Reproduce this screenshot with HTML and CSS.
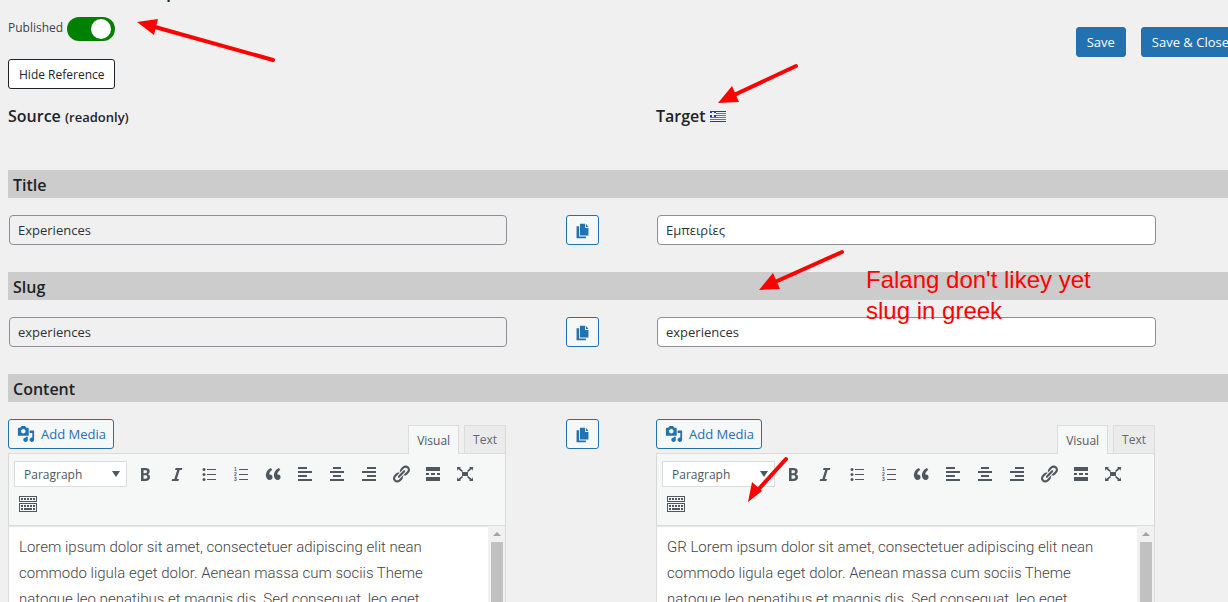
FILE: index.html
```html
<!DOCTYPE html>
<html lang="en">
<head>
  <meta charset="UTF-8" />
  <title>Falang translation</title>
  <link rel="stylesheet" href="styles.css">
</head>
<body>
  <!-- icon set -->
  <svg class="icon-defs" aria-hidden="true">
    <symbol id="i-copy" viewBox="0 0 20 20">
      <path d="M7 2h6v5h4v9H7zM14 2l3 4h-3zM3 5h3v12h8v2H3z"/>
    </symbol>
    <symbol id="i-media" viewBox="0 0 20 20">
      <path d="M13 11V4c0-.55-.45-1-1-1h-1.670L9 1H5L3.670 3H2c-.55 0-1 .45-1 1v7c0 .55.45 1 1 1h10c.55 0 1-.45 1-1zM7 4.500c1.380 0 2.500 1.120 2.500 2.500S8.380 9.500 7 9.500 4.500 8.380 4.500 7 5.620 4.500 7 4.500zM14 6h5v10.500c0 1.380-1.120 2.500-2.500 2.500S14 17.880 14 16.500s1.120-2.500 2.500-2.500c.17 0 .34.02.5.05V9h-3V6zm-4 8.050V13h2v3.500c0 1.380-1.120 2.500-2.500 2.500S7 17.880 7 16.500 8.120 14 9.500 14c.17 0 .34.02.5.05z"/>
    </symbol>
    <symbol id="i-bold" viewBox="0 0 20 20">
      <path d="M6 4v13h4.540c1.370 0 2.460-.33 3.260-1 .8-.66 1.200-1.580 1.200-2.770 0-.84-.17-1.510-.51-2.010s-.9-.85-1.670-1.030v-.09c.57-.1 1.020-.4 1.360-.9s.51-1.130.51-1.910c0-1.140-.39-1.980-1.170-2.500C12.750 4.260 11.500 4 9.780 4H6zm2.570 5.150V6.260h1.360c.73 0 1.270.11 1.610.32.34.22.51.58.51 1.070 0 .54-.16.92-.47 1.150s-.82.35-1.510.35h-1.500zm0 2.190h1.600c1.440 0 2.160.53 2.160 1.610 0 .6-.17 1.050-.51 1.340s-.86.43-1.570.43H8.570v-3.380z"/>
    </symbol>
    <symbol id="i-italic" viewBox="0 0 20 20">
      <path d="M14.780 6h-2.130l-2.800 9h2.120l-.62 2H4.600l.62-2h2.140l2.800-9H8.030l.62-2h6.750z"/>
    </symbol>
    <symbol id="i-ul" viewBox="0 0 20 20">
      <path d="M8 5h9v1H8zM8 10h9v1H8zM8 15h9v1H8z"/>
      <circle cx="5" cy="5.500" r="1.500"/><circle cx="5" cy="10.500" r="1.500"/><circle cx="5" cy="15.500" r="1.500"/>
    </symbol>
    <symbol id="i-quote" viewBox="0 0 20 20">
      <path d="M9.490 13.220c0-.74-.2-1.380-.61-1.900-.62-.78-1.830-.88-2.530-.72-.29-1.650 1.110-3.750 2.920-4.650L7.880 4c-2.730 1.300-5.420 4.280-4.960 8.050C3.210 14.430 4.590 16 6.540 16c.85 0 1.560-.25 2.120-.75s.83-1.180.83-2.030zm8.050 0c0-.74-.2-1.380-.61-1.900-.63-.78-1.830-.88-2.530-.72-.29-1.650 1.110-3.750 2.920-4.650L15.930 4c-2.730 1.300-5.410 4.280-4.950 8.050.29 2.380 1.660 3.950 3.610 3.950.85 0 1.560-.25 2.120-.75s.83-1.180.83-2.030z"/>
    </symbol>
    <symbol id="i-left" viewBox="0 0 20 20">
      <path d="M12 5V3H3v2h9zm5 4V7H3v2h14zm-5 4v-2H3v2h9zm5 4v-2H3v2h14z"/>
    </symbol>
    <symbol id="i-center" viewBox="0 0 20 20">
      <path d="M14 5V3H6v2h8zm3 4V7H3v2h14zm-3 4v-2H6v2h8zm3 4v-2H3v2h14z"/>
    </symbol>
    <symbol id="i-right" viewBox="0 0 20 20">
      <path d="M17 5V3H8v2h9zm0 4V7H3v2h14zm0 4v-2H8v2h9zm0 4v-2H3v2h14z"/>
    </symbol>
    <symbol id="i-link" viewBox="0 0 20 20">
      <path d="M17.740 2.760c1.680 1.690 1.680 4.410 0 6.100l-1.530 1.520c-1.120 1.120-2.700 1.470-4.140 1.090l2.620-2.610.76-.77.76-.76c.84-.84.84-2.200 0-3.040-.84-.85-2.200-.85-3.040 0l-.77.76-3.380 3.380c-.37-1.440-.02-3.020 1.100-4.140l1.520-1.530c1.690-1.680 4.420-1.680 6.100 0zM8.590 13.430l5.340-5.340c.42-.42.42-1.100 0-1.520-.44-.43-1.130-.39-1.530 0l-5.330 5.340c-.42.42-.42 1.100 0 1.520.44.43 1.130.39 1.520 0zm-.76 2.290l4.140-4.150c.38 1.440.03 3.020-1.090 4.140l-1.520 1.530c-1.690 1.680-4.410 1.680-6.100 0-1.680-1.680-1.680-4.420 0-6.100l1.530-1.520c1.120-1.120 2.700-1.470 4.140-1.100l-4.140 4.150c-.85.84-.85 2.200 0 3.050.84.84 2.200.84 3.040 0z"/>
    </symbol>
    <symbol id="i-more" viewBox="0 0 20 20">
      <path d="M17 7V3H3v4h14zM6 11V9H3v2h3zm6 0V9H8v2h4zm5 0V9h-3v2h3zm0 6v-4H3v4h14z"/>
    </symbol>
    <symbol id="i-full" viewBox="0 0 20 20">
      <path d="M7 8h6v4H7zM2 3h4L5 4l3 3-1 1-4-3-1 2zM18 3h-4l1 1-3 3 1 1 4-3 1 2zM2 17h4l-1-1 3-3-1-1-4 3-1-2zM18 17h-4l1-1-3-3 1-1 4 3 1-2z"/>
    </symbol>
    <symbol id="i-sink" viewBox="0 0 20 20">
      <path fill-rule="evenodd" d="M1 2h18v6H1zM2 3v4h16V3zM1 9h18v9H1zM2 10v7h16v-7z"/>
      <path d="M3 4h2v2H3zM6 4h2v2H6zM9 4h2v2H9zM12 4h2v2h-2zM15 4h2v2h-2zM3 11h2v2H3zM6 11h2v2H6zM9 11h2v2H9zM12 11h2v2h-2zM15 11h2v2h-2zM3 14h2v2H3zM6 14h8v2H6zM15 14h2v2h-2z"/>
    </symbol>
  </svg>

  <div class="page-title">p</div>

  <header class="top">
    <div>
      <label class="publish">Published <input type="checkbox" class="switch" checked></label>
      <button class="btn btn-dark">Hide Reference</button>
    </div>
    <div class="actions">
      <button class="btn btn-primary">Save</button>
      <button class="btn btn-primary">Save &amp; Close</button>
    </div>
  </header>

  <main>
    <div class="row heads">
      <h2>Source <small>(readonly)</small></h2>
      <h2 class="target">Target
        <svg class="flag" viewBox="0 0 16 11" aria-label="Greek">
          <path fill="#eef2fb" d="M0 0h16v11H0z"/>
          <path fill="#1c3fae" d="M0 0h16v1H0zM0 10h16v1H0zM0 0h2v2H0zM4 0h2v2H4zM0 4h2v2H0zM4 4h2v2H4z"/>
          <path fill="#4f74d2" d="M6 2h10v1H6zM6 4h10v1H6zM0 6h16v1H0zM0 8h16v1H0z"/>
        </svg>
      </h2>
    </div>

    <h3 class="bar">Title</h3>
    <div class="row">
      <input type="text" class="field" value="Experiences" aria-label="Source title" readonly>
      <button class="btn btn-copy" aria-label="Copy title"><svg><use href="#i-copy"/></svg></button>
      <input type="text" class="field" value="Εμπειρίες" aria-label="Target title">
    </div>

    <h3 class="bar">Slug</h3>
    <div class="row">
      <input type="text" class="field" value="experiences" aria-label="Source slug" readonly>
      <button class="btn btn-copy" aria-label="Copy slug"><svg><use href="#i-copy"/></svg></button>
      <input type="text" class="field" value="experiences" aria-label="Target slug">
    </div>

    <h3 class="bar">Content</h3>
    <div class="row">
      <section class="editor">
        <div class="editor-tools">
          <button class="btn btn-media"><svg><use href="#i-media"/></svg>Add Media</button>
          <div class="tabs">
            <button class="tab active">Visual</button>
            <button class="tab">Text</button>
          </div>
        </div>
        <div class="editor-box">
          <div class="toolbar">
            <select class="format" aria-label="Source format"><option>Paragraph</option></select>
            <button class="tool" aria-label="Bold"><svg><use href="#i-bold"/></svg></button>
            <button class="tool" aria-label="Italic"><svg><use href="#i-italic"/></svg></button>
            <button class="tool" aria-label="Bulleted list"><svg><use href="#i-ul"/></svg></button>
            <button class="tool" aria-label="Numbered list">
              <svg viewBox="0 0 20 20"><path d="M8 5h9v1H8zM8 10h9v1H8zM8 15h9v1H8z"/><text x="3" y="7">1</text><text x="3" y="12">2</text><text x="3" y="17">3</text></svg>
            </button>
            <button class="tool" aria-label="Blockquote"><svg><use href="#i-quote"/></svg></button>
            <button class="tool" aria-label="Align left"><svg><use href="#i-left"/></svg></button>
            <button class="tool" aria-label="Align center"><svg><use href="#i-center"/></svg></button>
            <button class="tool" aria-label="Align right"><svg><use href="#i-right"/></svg></button>
            <button class="tool" aria-label="Link"><svg><use href="#i-link"/></svg></button>
            <button class="tool" aria-label="Read more"><svg><use href="#i-more"/></svg></button>
            <button class="tool" aria-label="Fullscreen"><svg><use href="#i-full"/></svg></button>
            <button class="tool" aria-label="Toolbar toggle"><svg><use href="#i-sink"/></svg></button>
          </div>
          <div class="editor-body">
            <div class="text">Lorem ipsum dolor sit amet, consectetuer adipiscing elit nean<br>commodo ligula eget dolor. Aenean massa cum sociis Theme<br>natoque leo penatibus et magnis dis. Sed consequat, leo eget</div>
            <div class="scroll"></div>
          </div>
        </div>
      </section>

      <button class="btn btn-copy" aria-label="Copy content"><svg><use href="#i-copy"/></svg></button>

      <section class="editor">
        <div class="editor-tools">
          <button class="btn btn-media"><svg><use href="#i-media"/></svg>Add Media</button>
          <div class="tabs">
            <button class="tab active">Visual</button>
            <button class="tab">Text</button>
          </div>
        </div>
        <div class="editor-box">
          <div class="toolbar">
            <select class="format" aria-label="Target format"><option>Paragraph</option></select>
            <button class="tool" aria-label="Bold"><svg><use href="#i-bold"/></svg></button>
            <button class="tool" aria-label="Italic"><svg><use href="#i-italic"/></svg></button>
            <button class="tool" aria-label="Bulleted list"><svg><use href="#i-ul"/></svg></button>
            <button class="tool" aria-label="Numbered list">
              <svg viewBox="0 0 20 20"><path d="M8 5h9v1H8zM8 10h9v1H8zM8 15h9v1H8z"/><text x="3" y="7">1</text><text x="3" y="12">2</text><text x="3" y="17">3</text></svg>
            </button>
            <button class="tool" aria-label="Blockquote"><svg><use href="#i-quote"/></svg></button>
            <button class="tool" aria-label="Align left"><svg><use href="#i-left"/></svg></button>
            <button class="tool" aria-label="Align center"><svg><use href="#i-center"/></svg></button>
            <button class="tool" aria-label="Align right"><svg><use href="#i-right"/></svg></button>
            <button class="tool" aria-label="Link"><svg><use href="#i-link"/></svg></button>
            <button class="tool" aria-label="Read more"><svg><use href="#i-more"/></svg></button>
            <button class="tool" aria-label="Fullscreen"><svg><use href="#i-full"/></svg></button>
            <button class="tool" aria-label="Toolbar toggle"><svg><use href="#i-sink"/></svg></button>
          </div>
          <div class="editor-body">
            <div class="text">GR Lorem ipsum dolor sit amet, consectetuer adipiscing elit nean<br>commodo ligula eget dolor. Aenean massa cum sociis Theme<br>natoque leo penatibus et magnis dis. Sed consequat, leo eget</div>
            <div class="scroll"></div>
          </div>
        </div>
      </section>
    </div>
  </main>

  <!-- notes drawn over the form -->
  <svg class="arrows" aria-hidden="true">
    <g stroke="#f00" stroke-width="4" stroke-linecap="round">
      <path d="M273 60L155 27M796 66L734 95M842 252L775 282M786 459L757 491"/>
    </g>
    <path fill="#f00" d="M137 22l21-3-4 16zM718 103l14-17 7 16zM759 290l14-17 7 16zM748 502l4-20 10 9z"/>
  </svg>
  <p class="note">Falang don't likey yet<br>slug in greek</p>
</body>
</html>
```
FILE: styles.css
```css
* {
  box-sizing: border-box;
}
html {
  overflow: hidden;
}
body {
  position: relative;
  margin: 0;
  padding-left: 8px;
  height: 100vh;
  overflow: hidden;
  background-color: #f0f0f0;
  color: #1d2327;
  font-family: "Segoe UI", "Open Sans", sans-serif;
  font-size: 13px;
}
button, input, select {
  font-family: inherit;
  font-size: 13px;
}
svg {
  width: 20px;
  height: 20px;
  fill: currentColor;
}
.icon-defs {
  position: absolute;
  width: 0;
  height: 0;
}

/* header */
.page-title {
  position: absolute;
  top: -24px;
  left: 166px;
  font-size: 18px;
  line-height: 30px;
  font-weight: 600;
}
.top {
  display: flex;
  justify-content: space-between;
  padding-top: 17px;
}
.publish {
  display: flex;
  gap: 4px;
  height: 24px;
  margin-bottom: 18px;
  color: #3c434a;
  font-size: 12px;
  line-height: 22px;
}
.switch {
  appearance: none;
  width: 48px;
  height: 24px;
  margin: 0;
  padding: 2px 4px;
  border-radius: 12px;
  background-color: green;
}
.switch::before {
  content: "";
  display: block;
  width: 20px;
  height: 20px;
  margin-left: auto;
  border-radius: 50%;
  background-color: #fff;
}
.actions {
  display: flex;
  gap: 15px;
  margin-top: 10px;
  margin-right: -12px;
}

.btn {
  height: 30px;
  padding: 0 10px;
  border: 1px solid #2271b1;
  border-radius: 3px;
  background-color: #f6f7f7;
  color: #2271b1;
  white-space: nowrap;
}
.btn-dark {
  border-color: #1d2327;
  background-color: #fff;
  color: #1d2327;
  font-size: 12px;
}
.btn-primary {
  background-color: #2271b1;
  color: #fff;
}
.btn-copy {
  justify-self: center;
  width: 33px;
  padding: 0;
}
.btn-copy svg {
  display: block;
  width: 17px;
  height: 17px;
  margin: 0 auto;
}
.btn-media {
  display: flex;
  align-items: center;
  gap: 6px;
  padding: 0 7px 0 8px;
}
.btn-media svg {
  width: 18px;
  height: 18px;
}

/* rows */
.row {
  display: grid;
  grid-template-columns: 500fr 148fr 501fr 71fr;
  align-items: start;
}
.heads {
  height: 81px;
  padding-top: 15px;
}
h2, h3 {
  margin: 0;
  font-size: 16px;
  font-weight: 600;
  line-height: 24px;
}
h2 small {
  font-size: 13px;
}
.target {
  grid-column: 3;
}
.flag {
  width: 16px;
  height: 11px;
}
.bar {
  height: 28px;
  margin-bottom: 17px;
  padding: 3px 5px;
  background-color: #ccc;
}
.row:not(.heads) + .bar {
  margin-top: 27px;
}
.field {
  height: 30px;
  margin: 0 1px;
  padding: 0 8px;
  border: 1px solid #8c8f94;
  border-radius: 4px;
  background-color: #fff;
  color: #2c3338;
}
.field[readonly] {
  background-color: #f0f0f0;
}

/* editor */
.editor {
  margin-right: 2px;
}
.editor-tools {
  display: flex;
  justify-content: space-between;
  height: 34px;
}
.tabs {
  display: flex;
  gap: 5px;
  padding-top: 6px;
}
.tab {
  height: 28px;
  padding: 0 8px;
  border: 1px solid #dcdcde;
  border-bottom: none;
  background-color: #ebebeb;
  color: #646970;
  font-size: 12px;
}
.tab.active {
  position: relative;
  height: 29px;
  background-color: #f6f7f7;
  color: #50575e;
}
.editor-box {
  border: 1px solid #dcdcde;
  background-color: #fff;
}
.toolbar {
  display: flex;
  flex-wrap: wrap;
  align-content: flex-start;
  height: 72px;
  padding: 5px;
  border-bottom: 1px solid #dcdcde;
  box-shadow: 0 1px 1px rgba(0, 0, 0, 0.1);
  background-color: #f6f7f7;
}
.format {
  appearance: none;
  width: 113px;
  height: 26px;
  margin: 2px 2px 2px 0;
  padding: 0 9px;
  border: 1px solid #dcdcde;
  background-color: #fff;
  background-image: url("data:image/svg+xml,%3Csvg xmlns='http://www.w3.org/2000/svg' viewBox='0 0 8 6'%3E%3Cpath fill='%2350575e' d='M0 0h8L4 6z'/%3E%3C/svg%3E");
  background-position: right 6px center;
  background-repeat: no-repeat;
  background-size: 8px 6px;
  color: #50575e;
  font-size: 12px;
}
.tool {
  width: 28px;
  height: 26px;
  margin: 2px;
  padding: 0;
  border: none;
  background: none;
  color: #50575e;
}
.tool:last-child {
  margin-left: 0;
}
.tool svg {
  display: block;
  margin: 0 auto;
}
.tool text {
  font: bold 5px "Liberation Sans", sans-serif;
}
.editor-body {
  display: flex;
  justify-content: space-between;
}
.text {
  padding: 8px 10px;
  color: #444;
  font-family: Roboto, sans-serif;
  font-size: 15px;
  font-weight: 300;
  line-height: 26px;
  white-space: nowrap;
}
.scroll {
  display: flex;
  flex-direction: column;
  width: 17px;
  padding: 6px 2px 0 3px;
  background-color: #f1f1f1;
}
.scroll::before {
  content: "";
  width: 0;
  margin: 0 auto 6px;
  border: 4px solid transparent;
  border-top: none;
  border-bottom-color: #a3a3a3;
}
.scroll::after {
  content: "";
  flex: 1;
  background-color: #c1c1c1;
}

/* overlay */
.arrows {
  position: absolute;
  top: 0;
  left: 0;
  width: 100%;
  height: 100%;
  pointer-events: none;
}
.note {
  position: absolute;
  top: 264px;
  left: 866px;
  margin: 0;
  color: #f00;
  font-family: "Liberation Sans", sans-serif;
  font-size: 24px;
  line-height: 31px;
}
```
